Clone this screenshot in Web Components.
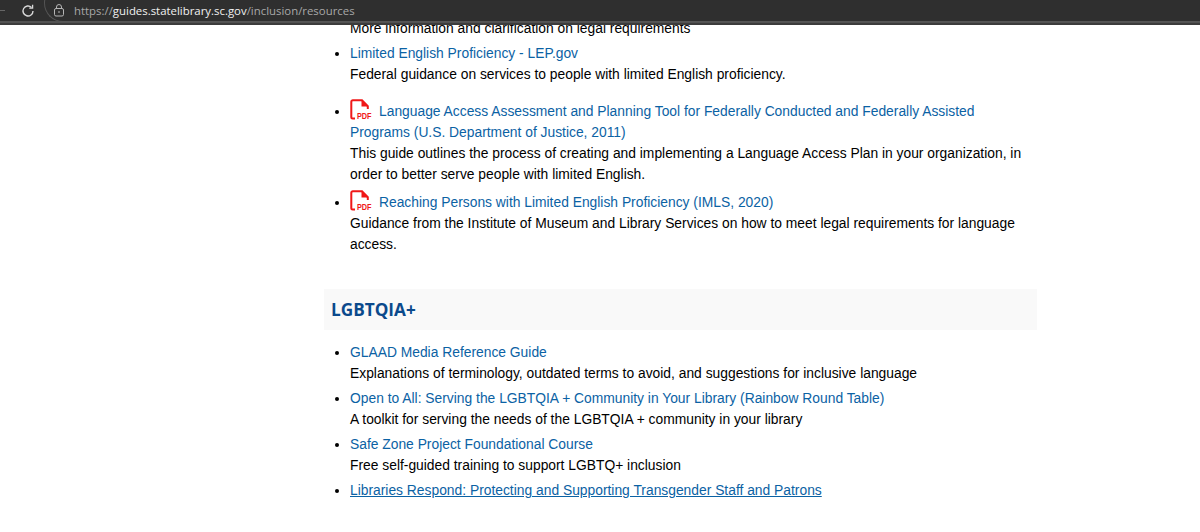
<!DOCTYPE html>
<html>
<head>
<meta charset="utf-8">
<title>Inclusion resources</title>
<style>
html, body { margin: 0; height: 100%; overflow: hidden; background: #fff; }
body { display: flex; flex-direction: column; font: 13.83px/21px "Liberation Sans", Arial, sans-serif; color: #000; }
</style>
</head>
<body>
<browser-bar url-host="guides.statelibrary.sc.gov" url-path="/inclusion/resources"></browser-bar>
<guide-page>
	<guide-list>
		<guide-item plain>More information and clarification on legal requirements</guide-item>
		<guide-item href="#" label="Limited English Proficiency - LEP.gov" gap="12">
			Federal guidance on services to people with limited English proficiency.
		</guide-item>
		<guide-item href="#" pdf gap="3" label="Language Access Assessment and Planning Tool for Federally Conducted and Federally Assisted Programs (U.S. Department of Justice, 2011)">
			This guide outlines the process of creating and implementing a Language Access Plan in your organization, in order to better serve people with limited English.
		</guide-item>
		<guide-item href="#" pdf label="Reaching Persons with Limited English Proficiency (IMLS, 2020)">
			Guidance from the Institute of Museum and Library Services on how to meet legal requirements for language access.
		</guide-item>
	</guide-list>
	<guide-heading>LGBTQIA+</guide-heading>
	<guide-list>
		<guide-item href="#" label="GLAAD Media Reference Guide">
			Explanations of terminology, outdated terms to avoid, and suggestions for inclusive language
		</guide-item>
		<guide-item href="#" label="Open to All: Serving the LGBTQIA + Community in Your Library (Rainbow Round Table)">
			A toolkit for serving the needs of the LGBTQIA + community in your library
		</guide-item>
		<guide-item href="#" label="Safe Zone Project Foundational Course">
			Free self-guided training to support LGBTQ+ inclusion
		</guide-item>
		<guide-item href="#" underline label="Libraries Respond: Protecting and Supporting Transgender Staff and Patrons"></guide-item>
	</guide-list>
</guide-page>
<script>
(function() {
	class BrowserBar extends HTMLElement {
		constructor() {
			super();
			this.attachShadow({mode: "open"}).innerHTML = `
				<style>
				:host { display: block; flex: none; height: 25px; overflow: hidden; box-sizing: border-box; background: #2f2f2f; border-bottom: 2px solid #3c3c3c; box-shadow: inset 0 -2px 0 0 #525252; }
				.row { display: flex; align-items: center; height: 21px; }
				.back { width: 5px; height: 1px; background: #666; margin-right: 15px; flex: none; }
				.reload { width: 16px; height: 16px; margin-right: 8px; flex: none; }
				.omni { display: flex; align-items: center; height: 38px; margin-top: -16px; padding: 16px 0 0 8px; border: 1px solid #565656; border-right: 0; border-radius: 19px 0 0 19px; flex: 1; box-sizing: border-box; }
				.lock { width: 12px; height: 13px; margin-right: 9px; flex: none; }
				.url { font: 11.4px "Open Sans", "Noto Sans", sans-serif; color: #a8a8a8; white-space: nowrap; }
				b { font-weight: 400; color: #f1f1f1; }
				</style>
				<div class="row">
					<span class="back"></span>
					<svg class="reload" viewBox="0 0 16 16" fill="none" stroke="#d8d8d8" stroke-width="1.4">
						<path d="M13 8a5 5 0 1 1-1.500-3.600"/>
						<path d="M12.600 1.800v3.400H9.200" stroke-width="1.300"/>
					</svg>
					<div class="omni">
						<svg class="lock" viewBox="0 0 12 13" fill="none" stroke="#b5b5b5">
							<rect x="1.500" y="4.500" width="9" height="7.500" rx="1.500"/>
							<path d="M3.500 4.500V3a2.500 2.500 0 0 1 5 0v1.500"/>
							<path d="M5 8h2"/>
						</svg>
						<span class="url">https://<b>${this.getAttribute("url-host")}</b>${this.getAttribute("url-path")}</span>
					</div>
				</div>`;
		}
	}

	class GuidePage extends HTMLElement {
		constructor() {
			super();
			this.attachShadow({mode: "open"}).innerHTML = `
				<style>
				:host { display: block; flex: 1; min-height: 0; overflow: hidden; padding-left: 324px; }
				.col { width: 713px; margin-top: -7px; }
				</style>
				<div class="col"><slot></slot></div>`;
		}
	}

	class GuideList extends HTMLElement {
		constructor() {
			super();
			this.attachShadow({mode: "open"}).innerHTML = `
				<style>
				:host { display: flex; flex-direction: column; gap: 4px; padding-left: 26px; padding-right: 10px; }
				</style>
				<slot></slot>`;
		}
	}

	class GuideItem extends HTMLElement {
		constructor() {
			super();
			let label = this.getAttribute("label");
			let gap = this.getAttribute("gap");
			let pdf = this.hasAttribute("pdf") ? `<svg class="pdf" viewBox="0 0 24 22" width="24" height="22">
				<path d="M5 19.500H2.800a1.500 1.500 0 0 1-1.500-1.500V2.700a1.500 1.500 0 0 1 1.500-1.500H12l5.800 6V10" fill="none" stroke="#f01818" stroke-width="2"/>
				<path d="M11.500 1.200v6.300h6.300z" fill="#f01818"/>
				<text x="7" y="20" font-family="Liberation Sans, sans-serif" font-size="9" font-weight="700" fill="#f01818" textLength="14.500" lengthAdjust="spacingAndGlyphs">PDF</text>
			</svg>` : "";
			this.attachShadow({mode: "open"}).innerHTML = `
				<style>
				:host { display: list-item; list-style: ${this.hasAttribute("plain") ? "none" : "disc"}; }
				a { color: #0b62a4; text-decoration: none; }
				a.under { text-decoration: underline; }
				.pdf { vertical-align: -2px; margin: -5px 5px -3px 0; }
				</style>
				${label ? `<div>${pdf}<a href="${this.getAttribute("href")}" class="${this.hasAttribute("underline") ? "under" : ""}">${label}</a></div>` : ""}
				<div><slot></slot></div>`;
			if (gap) this.style.marginBottom = gap + "px";
		}
	}

	class GuideHeading extends HTMLElement {
		constructor() {
			super();
			this.attachShadow({mode: "open"}).innerHTML = `
				<style>
				:host { display: block; height: 41px; margin: 34px 0 12px; padding: 0 7px; background: #f9f9f9; color: #0b4a8c; font: 700 17.2px/41px "Open Sans", "Noto Sans", sans-serif; }
				</style>
				<slot></slot>`;
		}
	}

	customElements.define("browser-bar", BrowserBar);
	customElements.define("guide-page", GuidePage);
	customElements.define("guide-list", GuideList);
	customElements.define("guide-item", GuideItem);
	customElements.define("guide-heading", GuideHeading);
})();
</script>
</body>
</html>
